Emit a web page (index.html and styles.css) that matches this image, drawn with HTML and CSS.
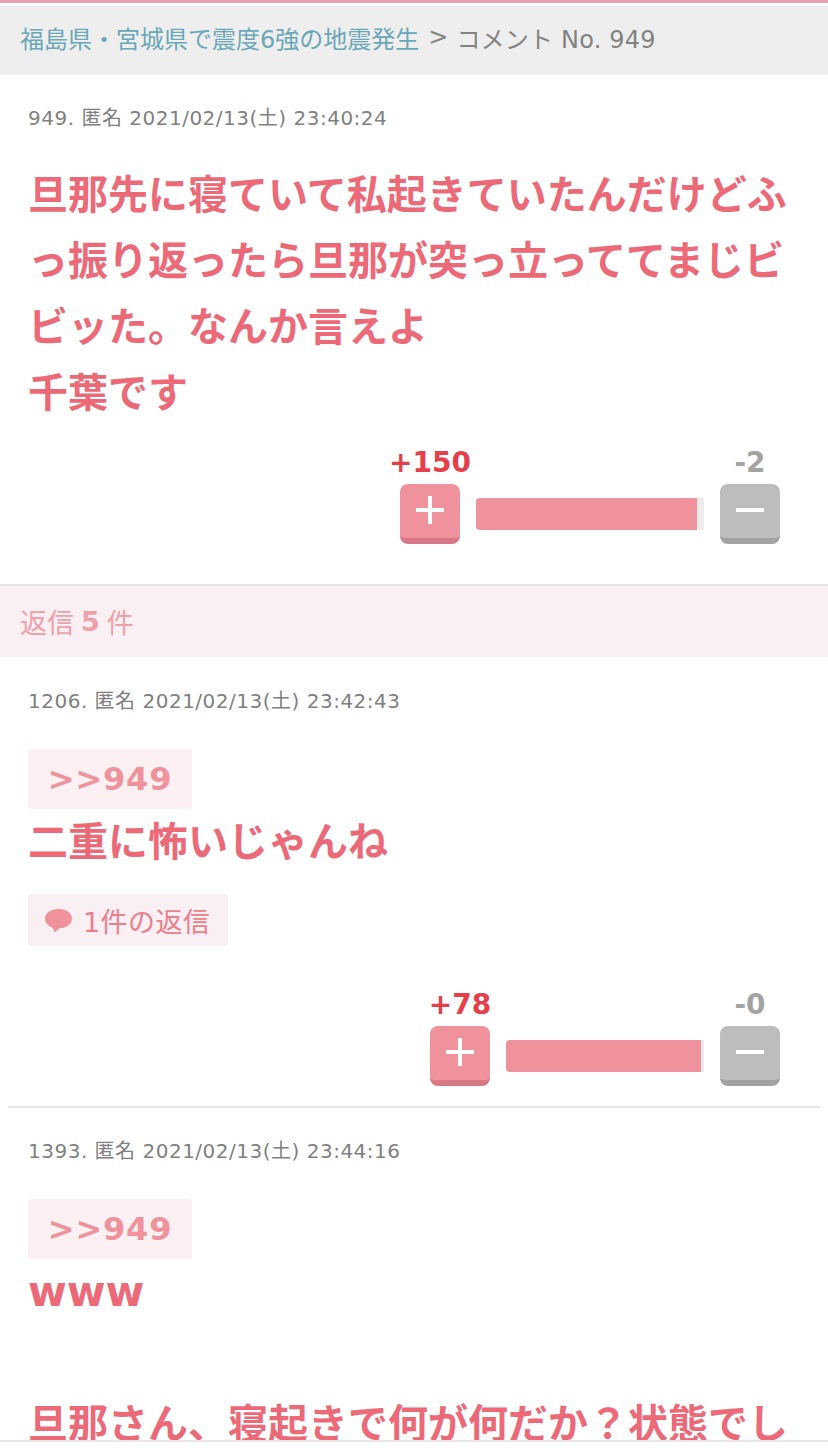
FILE: index.html
```html
<!DOCTYPE html>
<html lang="ja">
<head>
<meta charset="utf-8">
<title>コメント No. 949</title>
<link rel="stylesheet" href="styles.css">
</head>
<body>
<div class="page">
  <nav class="crumb"><a class="crumb-link">福島県・宮城県で震度6強の地震発生</a><span class="crumb-sep">&gt;</span><span class="crumb-cur">コメント No. 949</span></nav>

  <article class="comment main">
    <div class="meta">949. 匿名 2021/02/13(土) 23:40:24</div>
    <div class="body">旦那先に寝ていて私起きていたんだけどふっ振り返ったら旦那が突っ立っててまじビビッた。なんか言えよ<br>千葉です</div>
    <div class="vote">
      <div class="vote-col">
        <div class="count plus">+150</div>
        <div class="btn btn-plus"><svg viewBox="0 0 60 54" class="ic"><path d="M30 12v28M16 26h28"/></svg></div>
      </div>
      <div class="bar wide"><div class="fill" style="width:97%"></div></div>
      <div class="vote-col">
        <div class="count minus">-2</div>
        <div class="btn btn-minus"><svg viewBox="0 0 60 54" class="ic"><path d="M16 26h28"/></svg></div>
      </div>
    </div>
  </article>

  <h2 class="replies">返信 <b>5</b> 件</h2>

  <article class="comment reply first">
    <div class="meta">1206. 匿名 2021/02/13(土) 23:42:43</div>
    <div class="anchor">&gt;&gt;949</div>
    <div class="body">二重に怖いじゃんね</div>
    <div class="thread"><svg viewBox="0 0 30 26" class="bubble"><path d="M15 1C7 1 1 5 1 11c0 5 4 8.500 8 9.500 1 1.500 1.500 3.500 1.500 4.500 2-.5 4-2.500 5.500-4C23 21 29 17 29 11 29 5 23 1 15 1z"/></svg>1件の返信</div>
    <div class="vote">
      <div class="vote-col">
        <div class="count plus">+78</div>
        <div class="btn btn-plus"><svg viewBox="0 0 60 54" class="ic"><path d="M30 12v28M16 26h28"/></svg></div>
      </div>
      <div class="bar narrow"><div class="fill" style="width:98.500%"></div></div>
      <div class="vote-col">
        <div class="count minus">-0</div>
        <div class="btn btn-minus"><svg viewBox="0 0 60 54" class="ic"><path d="M16 26h28"/></svg></div>
      </div>
    </div>
  </article>

  <hr class="rule">

  <article class="comment reply">
    <div class="meta">1393. 匿名 2021/02/13(土) 23:44:16</div>
    <div class="anchor">&gt;&gt;949</div>
    <div class="body latin">www</div>
    <div class="body second">旦那さん、寝起きで何が何だか？状態でし</div>
  </article>
</div>
<div class="bottom"></div>
</body>
</html>
```

FILE: styles.css
```css
* { box-sizing: border-box; }
html, body { margin: 0; padding: 0; height: 1454px; overflow: hidden; background: #fff; }
body { font-family: "DejaVu Sans", "Noto Sans CJK JP", sans-serif; color: #808080; }
.page { border-top: 3px solid #eb9fae; padding-top: 3px; }

.crumb {
  height: 69px;
  background: #eeeeee;
  padding: 0 20px 7px;
  display: flex;
  align-items: center;
  font-size: 24px;
  color: #828282;
  white-space: nowrap;
}
.crumb-link { color: #6aa7b8; }
.crumb-sep { margin: 0 8px 0 9px; }
.crumb-cur { letter-spacing: .2px; }

.comment { padding: 0 28px; }
.main { padding-top: 32px; height: 511px; border-bottom: 2px solid #e6e6e6; }
.meta { font-size: 20px; letter-spacing: .5px; line-height: 22px; color: #808080; white-space: nowrap; }

.body {
  margin-top: 33px;
  font-size: 40px;
  line-height: 66px;
  font-weight: 700;
  color: #ec6a78;
  line-break: loose;
}

.vote { display: flex; justify-content: flex-end; align-items: flex-end; gap: 16px; padding-right: 20px; }
.main .vote { margin-top: 20px; }
.vote-col { width: 60px; display: flex; flex-direction: column; align-items: center; }
.count { font-size: 28px; line-height: 34px; font-weight: 700; white-space: nowrap; }
.count.plus { color: #e5404a; }
.count.minus { color: #a3a3a3; }
.btn { width: 60px; height: 60px; border-radius: 8px; margin-top: 4px; }
.btn-plus { background: #f0929c; border-bottom: 6px solid #d87884; }
.btn-minus { background: #bdbdbd; border-bottom: 6px solid #a2a2a2; }
.ic { display: block; width: 60px; height: 54px; fill: none; stroke: #fff; stroke-width: 4; }
.bar { height: 32px; margin-bottom: 14px; background: #ececec; border-radius: 4px 0 0 4px; overflow: hidden; }
.bar.wide { width: 228px; }
.bar.narrow { width: 198px; }
.fill { height: 100%; background: #f0929c; }

.replies {
  margin: 0;
  height: 71px;
  background: #faeff2;
  padding: 0 20px;
  display: flex;
  align-items: center;
  gap: 7px;
  font-size: 27px;
  font-weight: 400;
  color: #f0a0ab;
}
.replies b { font-weight: 700; }

.reply { padding-top: 32px; }
.first { padding-top: 33px; }
.anchor {
  margin-top: 37px;
  width: 164px;
  height: 60px;
  background: #fcf0f2;
  border-radius: 4px;
  display: flex;
  align-items: center;
  justify-content: center;
  font-size: 32px;
  font-weight: 700;
  letter-spacing: .8px;
  color: #f0929c;
}
.reply .body { margin-top: 0; }
.reply .latin { font-size: 42px; }
.reply .second { margin-top: 66px; }
.thread {
  margin-top: 19px;
  width: 200px;
  height: 52px;
  background: #faeff2;
  border-radius: 4px;
  display: flex;
  align-items: center;
  padding-left: 16px;
  gap: 10px;
  font-size: 27px;
  letter-spacing: .4px;
  color: #ea7f8d;
  white-space: nowrap;
}
.bubble { width: 29px; height: 25px; fill: #f0929c; flex: none; }
.first .vote { margin-top: 42px; }
.rule { margin: 20px 8px 0; border: 0; height: 2px; background: #e6e6e6; }
.bottom {
  position: fixed;
  left: 0; right: 0; bottom: 0;
  height: 14px;
  background: #fff;
  border-top: 2px solid #e6e6e6;
}
```
